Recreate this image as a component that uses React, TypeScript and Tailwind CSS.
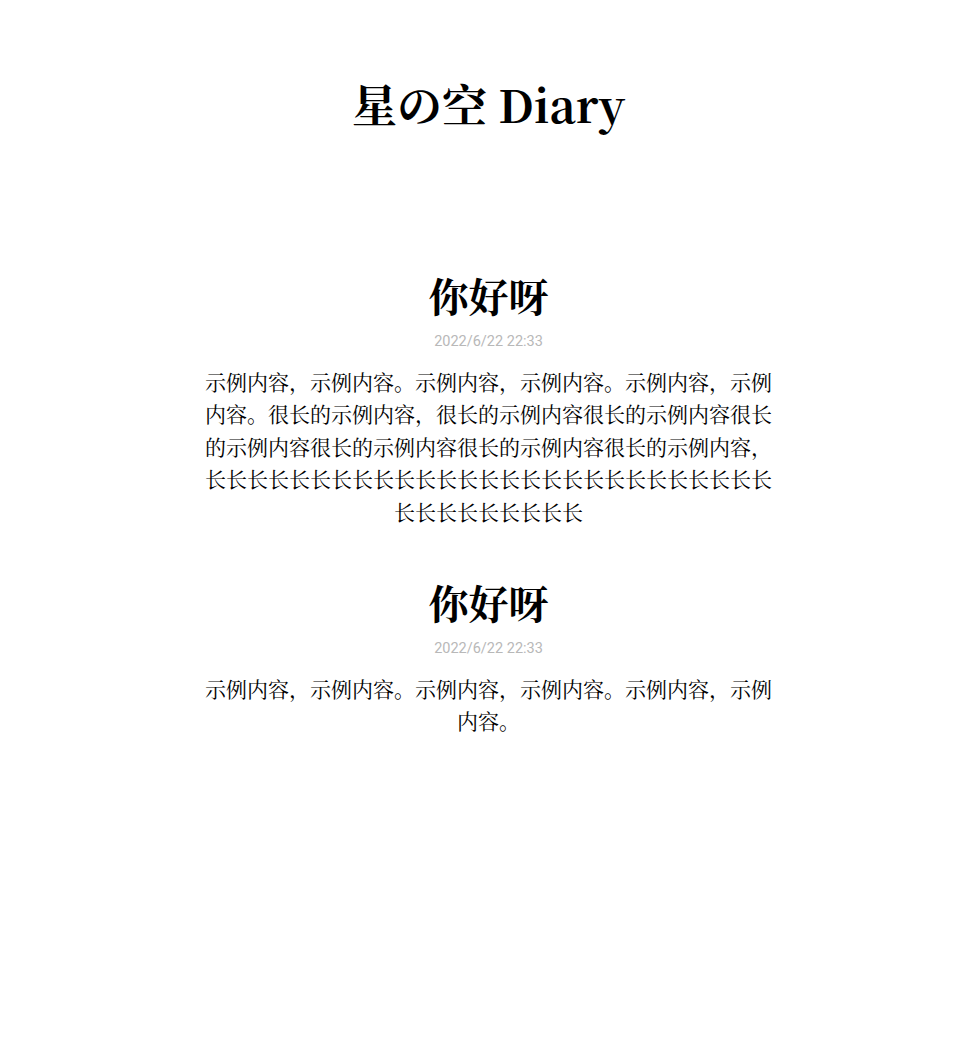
const posts = [
  {
    title: "你好呀",
    time: "2022/6/22 22:33",
    body: "示例内容，示例内容。示例内容，示例内容。示例内容，示例内容。很长的示例内容，很长的示例内容很长的示例内容很长的示例内容很长的示例内容很长的示例内容很长的示例内容，长长长长长长长长长长长长长长长长长长长长长长长长长长长长长长长长长长长长",
  },
  {
    title: "你好呀",
    time: "2022/6/22 22:33",
    body: "示例内容，示例内容。示例内容，示例内容。示例内容，示例内容。",
  },
];

export default function App() {
  return (
    <div className="min-h-screen bg-white text-black font-['Noto_Serif_CJK_SC',serif]">
      <header className="pt-[70px] pb-[130px] text-center">
        <h1 className="text-[45px] font-bold leading-[67px]">星の空 Diary</h1>
      </header>
      <main className="mx-auto w-[580px] text-center">
        {posts.map((post, i) => (
          <article key={i} className="mb-[47px]">
            <h2 className="text-[40px] font-bold leading-[56px]">{post.title}</h2>
            <div className="mt-[9px] text-[14.5px] text-[#b8b8b8] font-['Roboto',sans-serif] leading-[20px]">
              {post.time}
            </div>
            <p className="mt-[13px] text-[21px] leading-[32.4px]">{post.body}</p>
          </article>
        ))}
      </main>
    </div>
  );
}
